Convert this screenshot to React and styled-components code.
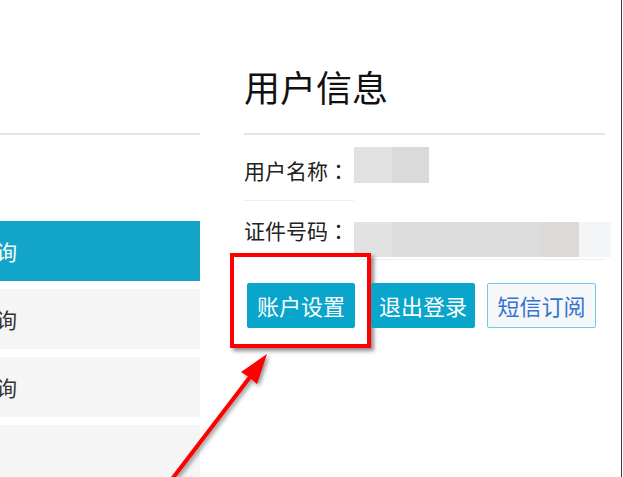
import React from 'react';
import styled, { createGlobalStyle } from 'styled-components';

const GlobalStyle = createGlobalStyle`
  html, body {
    margin: 0;
    padding: 0;
    background: #ffffff;
    overflow: hidden;
  }
  body {
    font-family: "Noto Sans CJK SC", "Noto Sans", sans-serif;
    color: #222;
  }
`;

// --- 페이지 레이아웃 ---
const Page = styled.div`
  position: relative;
  display: flex;
  width: 621px;
  height: 477px;
  border-right: 1px solid #3d3d3d;
  overflow: hidden;
`;

const Sidebar = styled.aside`
  flex-shrink: 0;
  width: 297px;
  margin-left: -97px;
`;

const SideHeader = styled.div`
  height: 133px;
  border-bottom: 2px solid #e4e4e4;
`;

const Menu = styled.ul`
  list-style: none;
  margin: 86px 0 0;
  padding: 0;
  display: flex;
  flex-direction: column;
  gap: 8px;
`;

const MenuItem = styled.li`
  height: 60px;
  line-height: 60px;
  padding-left: 30px;
  font-size: 21px;
  color: ${({ $active }) => ($active ? '#ffffff' : '#333333')};
  background-color: ${({ $active }) => ($active ? '#13a5c9' : '#f5f5f5')};
  white-space: nowrap;
`;

const Main = styled.section`
  flex-shrink: 0;
  width: 361px;
  margin-left: 44px;
`;

const Title = styled.h1`
  margin: 0;
  padding: 68px 0 28px;
  font-size: 36px;
  line-height: 37px;
  font-weight: 400;
  color: #111;
  border-bottom: 2px solid #e4e4e4;
`;

// --- 사용자 정보 표 ---
const InfoRow = styled.div`
  display: flex;
  align-items: flex-start;
`;

const Label = styled.div`
  flex-shrink: 0;
  width: 110px;
  padding-top: ${({ $top }) => $top}px;
  padding-bottom: ${({ $bottom }) => $bottom}px;
  font-size: 21px;
  line-height: 21px;
  color: #222;
  white-space: nowrap;
  border-bottom: ${({ $line }) => ($line ? '1px solid #efefef' : 'none')};
`;

// 콜론은 가운데 정렬되는 TC 글꼴로
const Colon = styled.span`
  font-family: "Noto Sans CJK TC", "Noto Sans CJK SC", sans-serif;
`;

const Value = styled.div`
  width: 251px;
  padding-top: ${({ $top }) => $top}px;
  padding-bottom: ${({ $bottom }) => $bottom}px;
  border-bottom: ${({ $line }) => ($line ? '1px solid #efefef' : 'none')};
`;

const Masked = styled.div`
  display: flex;
  height: ${({ $h }) => $h}px;
`;

const MaskPart = styled.span`
  flex-shrink: 0;
  width: ${({ $w }) => $w}px;
  background-color: ${({ $c }) => $c};
`;

// --- 버튼 ---
const ButtonBar = styled.div`
  display: flex;
  align-items: center;
  margin-top: 23px;
  padding-left: 3px;
`;

const ActionButton = styled.button`
  position: relative;
  height: 45px;
  padding: 0 ${({ $pad }) => $pad}px;
  margin-left: ${({ $gap }) => $gap || 0}px;
  font-family: inherit;
  font-size: 22px;
  line-height: 43px;
  border-radius: 2px;
  border: 1px solid ${({ $outline }) => ($outline ? '#72c9ea' : '#0aa5ca')};
  background-color: ${({ $outline }) => ($outline ? '#f5f7f9' : '#0aa5ca')};
  color: ${({ $outline }) => ($outline ? '#3472cf' : '#ffffff')};
  cursor: pointer;
`;

// --- 주석(빨간 박스 + 화살표) ---
const Highlight = styled.span`
  position: absolute;
  left: -18px;
  top: -31px;
  width: 133px;
  height: 87px;
  border: 4px solid #ff0000;
  box-shadow: 3px 3px 4px rgba(0, 0, 0, 0.45);
  pointer-events: none;
`;

const ArrowLayer = styled.svg`
  position: absolute;
  left: 0;
  top: 0;
  width: 623px;
  height: 477px;
  pointer-events: none;
  filter: drop-shadow(2px 2px 2px rgba(0, 0, 0, 0.45));
`;

const menuItems = [
  { label: '订单查询', active: true },
  { label: '退票查询' },
  { label: '改签查询' },
  { label: '其他' },
];

export default function App() {
  return (
    <>
      <GlobalStyle />
      <Page>
        <Sidebar>
          <SideHeader />
          <Menu>
            {menuItems.map(item => (
              <MenuItem key={item.label} $active={item.active}>
                {item.label}
              </MenuItem>
            ))}
          </Menu>
        </Sidebar>

        <Main>
          <Title>用户信息</Title>

          <InfoRow>
            <Label $top={25} $bottom={19} $line>用户名称<Colon>：</Colon></Label>
            <Value $top={12}>
              <Masked $h={36}>
                <MaskPart $w={38} $c="#e1e1e1" />
                <MaskPart $w={37} $c="#dadada" />
              </Masked>
            </Value>
          </InfoRow>

          <InfoRow>
            <Label $top={19}>证件号码<Colon>：</Colon></Label>
            <Value $top={21} $bottom={2} $line>
              <Masked $h={35}>
                <MaskPart $w={38} $c="#e2e2e2" />
                <MaskPart $w={150} $c="#dcdcdc" />
                <MaskPart $w={37} $c="#dcdad8" />
                <MaskPart $w={32} $c="#f4f5f7" />
              </Masked>
            </Value>
          </InfoRow>

          <ButtonBar>
            <ActionButton $pad={9}>
              账户设置
              <Highlight />
            </ActionButton>
            <ActionButton $pad={7} $gap={16}>退出登录</ActionButton>
            <ActionButton $pad={9.5} $gap={12} $outline>短信订阅</ActionButton>
          </ButtonBar>
        </Main>

        <ArrowLayer viewBox="0 0 623 477">
          <line x1="166" y1="487" x2="250" y2="377" stroke="#ff0000" strokeWidth="4" />
          <polygon points="267,354 241,372 249,377 257,384" fill="#ff0000" />
        </ArrowLayer>
      </Page>
    </>
  );
}
